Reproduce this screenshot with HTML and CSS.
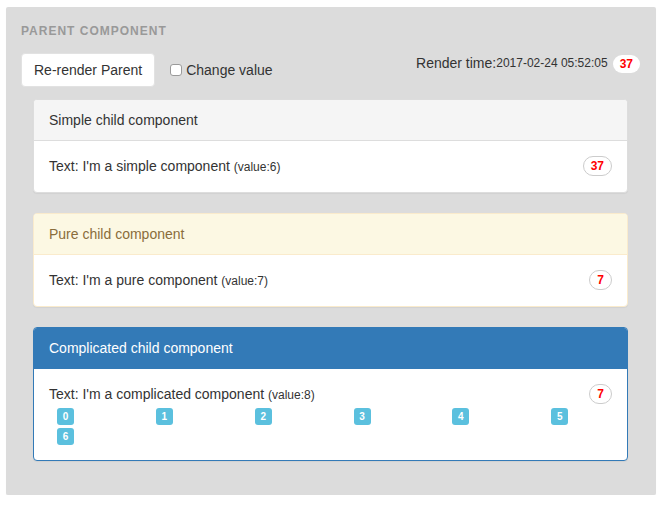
FILE: index.html
```html
<!DOCTYPE html>
<html>
<head>
<meta charset="utf-8">
<link rel="stylesheet" href="styles.css">
</head>
<body>
<div class="page">
  <div class="parent">
    <h4 class="parent-title">Parent component</h4>
    <div class="controls">
      <button class="btn">Re-render Parent</button>
      <label class="check"><input type="checkbox" class="checkbox"><span>Change value</span></label>
      <div class="render-time">
        <span>Render time:</span><span class="date">2017-02-24 05:52:05</span><span class="badge badge-solid">37</span>
      </div>
    </div>
    <div class="children">
      <div class="panel panel-default">
        <div class="panel-heading">Simple child component</div>
        <div class="panel-body">
          <div class="line">
            <span>Text: I'm a simple component <small>(value:6)</small></span>
            <span class="badge">37</span>
          </div>
        </div>
      </div>
      <div class="panel panel-warning">
        <div class="panel-heading">Pure child component</div>
        <div class="panel-body">
          <div class="line">
            <span>Text: I'm a pure component <small>(value:7)</small></span>
            <span class="badge">7</span>
          </div>
        </div>
      </div>
      <div class="panel panel-primary">
        <div class="panel-heading">Complicated child component</div>
        <div class="panel-body">
          <div class="line">
            <span>Text: I'm a complicated component <small>(value:8)</small></span>
            <span class="badge">7</span>
          </div>
          <div class="labels">
            <div class="cell"><span class="label">0</span></div>
            <div class="cell"><span class="label">1</span></div>
            <div class="cell"><span class="label">2</span></div>
            <div class="cell"><span class="label">3</span></div>
            <div class="cell"><span class="label">4</span></div>
            <div class="cell"><span class="label">5</span></div>
            <div class="cell"><span class="label">6</span></div>
          </div>
        </div>
      </div>
    </div>
  </div>
</div>
</body>
</html>
```

FILE: styles.css
```css
* { box-sizing: border-box; }
html, body { margin: 0; padding: 0; background: #fff; }
body {
  font-family: "Liberation Sans", Arial, sans-serif;
  font-size: 14px;
  line-height: 20px;
  color: #333;
}
.page { padding: 7px 6px 0 6px; }
.parent {
  width: 650px;
  height: 488px;
  background: #dcdcdc;
  padding: 16px 15px 15px 15px;
  border-radius: 2px;
  box-shadow: 0 1px 1px rgba(0,0,0,0.06);
}
.parent-title {
  margin: 0;
  font-size: 12px;
  line-height: 17px;
  font-weight: bold;
  text-transform: uppercase;
  letter-spacing: 1px;
  color: #999;
}
.controls {
  display: flex;
  align-items: flex-start;
  margin-top: 13px;
}
.btn {
  font-family: inherit;
  font-size: 14px;
  line-height: 20px;
  color: #333;
  background: #fff;
  border: 1px solid #e2e2e2;
  border-radius: 4px;
  padding: 6px 12px;
  height: 34px;
  white-space: nowrap;
  cursor: pointer;
}
.check {
  display: flex;
  align-items: center;
  margin-left: 15px;
  height: 34px;
  padding-bottom: 1px;
}
.checkbox {
  appearance: none;
  -webkit-appearance: none;
  width: 12px;
  height: 12px;
  margin: 1px 4px 0 0;
  background: #fff;
  border: 1px solid #9a9a9a;
  border-radius: 3px;
}
.render-time {
  margin-left: auto;
  display: flex;
  align-items: center;
  height: 20px;
  margin-right: 1px;
}
.date { font-size: 12px; }
.badge {
  display: inline-block;
  font-size: 12px;
  font-weight: bold;
  line-height: 12px;
  color: #f00;
  background: #fff;
  border: 1px solid #ccc;
  border-radius: 10px;
  padding: 3px 7px;
  text-align: center;
}
.badge-solid {
  border: none;
  margin-left: 5px;
  margin-top: 2px;
}
.children {
  margin-top: 12px;
  padding: 0 13px 0 12px;
}
.panel {
  background: #fff;
  border: 1px solid #ddd;
  border-radius: 4px;
  margin-bottom: 20px;
  box-shadow: 0 1px 1px rgba(0,0,0,0.05);
}
.panel-heading {
  padding: 10px 15px;
  border-bottom: 1px solid #ddd;
  border-radius: 3px 3px 0 0;
  background: #f5f5f5;
}
.panel-body { padding: 15px; }
.panel-warning { border-color: #faebcc; }
.panel-warning .panel-heading {
  background: #fcf8e3;
  color: #8a6d3b;
  border-bottom-color: #faebcc;
}
.panel-primary { border-color: #337ab7; }
.panel-primary .panel-heading {
  background: #337ab7;
  color: #fff;
  border-bottom-color: #337ab7;
}
.line {
  display: flex;
  justify-content: space-between;
  align-items: flex-start;
}
small { font-size: 12px; }
.labels {
  display: grid;
  grid-template-columns: repeat(6, 1fr);
  margin: 0 -15px;
}
.cell {
  height: 20px;
  display: flex;
  align-items: flex-end;
  padding-left: 23px;
}
.label {
  display: inline-block;
  width: 17px;
  height: 17px;
  line-height: 17px;
  text-align: center;
  background: #5bc0de;
  color: #fff;
  font-weight: bold;
  font-size: 10px;
  border-radius: 3px;
}
```
